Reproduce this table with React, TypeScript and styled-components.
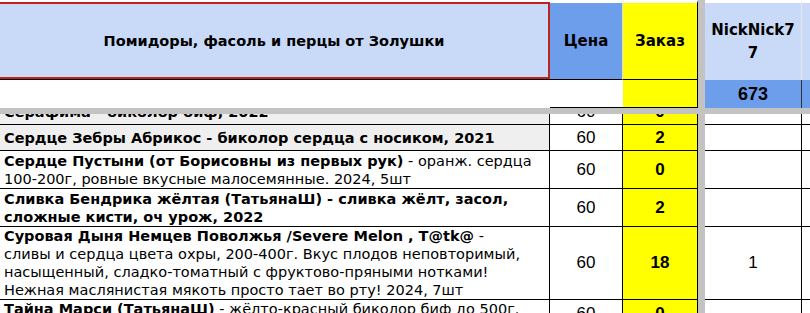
import styled, { createGlobalStyle } from 'styled-components';

const GlobalStyle = createGlobalStyle`
  html, body {
    margin: 0;
    padding: 0;
    background: #fff;
  }
`;

const LIGHT_BLUE = '#c9daf8';
const BLUE = '#6d9eeb';
const YELLOW = '#ffff00';
const SPLIT = '#c3c3c3';

const Sheet = styled.div`
  width: 810px;
  height: 313px;
  overflow: hidden;
  display: flex;
  flex-direction: column;
  font-family: "DejaVu Sans", Verdana, sans-serif;
  color: #000;
`;

const Row = styled.div<{ $h: number }>`
  display: flex;
  flex: none;
  height: ${p => p.$h}px;
`;

const Cell = styled.div<{ $w?: number; $bg?: string; $right?: string; $bottom?: string; $top?: number }>`
  box-sizing: border-box;
  ${p => (p.$w ? `width: ${p.$w}px; flex: none;` : 'flex: 1;')}
  height: 100%;
  background: ${p => p.$bg || '#fff'};
  border-right: ${p => (p.$right ? `1px solid ${p.$right}` : 'none')};
  border-bottom: ${p => (p.$bottom ? `1px solid ${p.$bottom}` : 'none')};
  border-top: ${p => (p.$top ? `${p.$top}px solid #fff` : 'none')};
  display: flex;
  align-items: center;
  justify-content: center;
  text-align: center;
  overflow: hidden;
`;

const Split = styled.div`
  width: 7px;
  flex: none;
  height: 100%;
  background: ${SPLIT};
`;

const HSplit = styled.div`
  height: 6px;
  flex: none;
  background: ${SPLIT};
`;

const TitleCell = styled.div`
  box-sizing: border-box;
  width: 550px;
  flex: none;
  height: 100%;
  padding-top: 2px;
  border-bottom: 1px solid #000;
`;

const TitleBox = styled.div`
  box-sizing: border-box;
  height: 77px;
  background: ${LIGHT_BLUE};
  border-top: 2px solid #c0231e;
  border-right: 2px solid #c0231e;
  border-bottom: 2px solid #c0231e;
  display: flex;
  align-items: center;
  justify-content: center;
  font-weight: bold;
  font-size: 14.5px;
`;

const HeadText = styled.div`
  font-weight: bold;
  font-size: 15px;
  line-height: 23px;
`;

const Total = styled.span`
  font-family: "Liberation Sans", Arial, sans-serif;
  font-weight: bold;
  font-size: 18px;
`;

const Body = styled.div`
  flex: 1;
  overflow: hidden;
`;

const BodyInner = styled.div`
  margin-top: -15px;
  display: flex;
  flex-direction: column;
`;

const NameCell = styled.div<{ $bg?: string; $top?: boolean }>`
  box-sizing: border-box;
  width: 550px;
  flex: none;
  height: 100%;
  padding: 0 4px;
  background: ${p => p.$bg || '#fff'};
  border-right: 1px solid #000;
  border-bottom: 1px solid #000;
  display: flex;
  flex-direction: column;
  justify-content: ${p => (p.$top ? 'flex-start' : 'center')};
  overflow: hidden;
  font-size: 14.5px;
  line-height: 18px;
`;

const Line = styled.div`
  white-space: nowrap;
`;

const Num = styled.span<{ $bold?: boolean }>`
  font-family: "Liberation Sans", Arial, sans-serif;
  font-size: 17px;
  font-weight: ${p => (p.$bold ? 'bold' : 'normal')};
`;

type Item = {
  h: number;
  bg?: string;
  top?: boolean;
  lines: React.ReactNode[];
  price: string;
  order: string;
  nick?: string;
};

const items: Item[] = [
  { h: 26, bg: '#efefef', lines: [<b>Серафима - биколор биф, 2022</b>], price: '60', order: '0' },
  { h: 26, bg: '#efefef', lines: [<b>Сердце Зебры Абрикос - биколор сердца с носиком, 2021</b>], price: '60', order: '2' },
  {
    h: 38,
    lines: [
      <><b>Сердце Пустыни (от Борисовны из первых рук)</b> - оранж. сердца</>,
      '100-200г, ровные вкусные малосемянные. 2024, 5шт',
    ],
    price: '60',
    order: '0',
  },
  {
    h: 38,
    lines: [
      <b>Сливка Бендрика жёлтая (ТатьянаШ) - сливка жёлт, засол,</b>,
      <b>сложные кисти, оч урож, 2022</b>,
    ],
    price: '60',
    order: '2',
  },
  {
    h: 73,
    lines: [
      <><b>Суровая Дыня Немцев Поволжья /Severe Melon , T@tk@</b> -</>,
      'сливы  и сердца цвета охры, 200-400г. Вкус плодов неповторимый,',
      'насыщенный, сладко-томатный с фруктово-пряными нотками!',
      'Нежная маслянистая мякоть просто тает во рту! 2024, 7шт',
    ],
    price: '60',
    order: '18',
    nick: '1',
  },
  {
    h: 28,
    top: true,
    lines: [
      <><b>Тайна Марси (ТатьянаШ)</b> - жёлто-красный биколор биф до 500г.</>,
      'Урожайный, вкусный. 2024',
    ],
    price: '60',
    order: '0',
  },
];

const App = () => {
  return (
    <Sheet>
      <GlobalStyle />
      <Row $h={80}>
        <TitleCell>
          <TitleBox>Помидоры, фасоль и перцы от Золушки</TitleBox>
        </TitleCell>
        <Cell $w={73} $bg={BLUE} $top={3} $right="#dcdcdc" $bottom="#000">
          <HeadText>Цена</HeadText>
        </Cell>
        <Cell $w={75} $bg={YELLOW} $top={3} $right="#000" $bottom="#000">
          <HeadText>Заказ</HeadText>
        </Cell>
        <Split />
        <Cell $w={97} $bg={LIGHT_BLUE} $top={3} $right="#e8e8e8">
          <HeadText>NickNick7<br />7</HeadText>
        </Cell>
        <Cell $bg={LIGHT_BLUE} $top={3} />
      </Row>
      <Row $h={28}>
        <Cell $w={550} />
        <Cell $w={73} $bottom="#000" />
        <Cell $w={75} $bg={YELLOW} $right="#000" $bottom="#000" />
        <Split />
        <Cell $w={97} $bg={BLUE} $right="#333">
          <Total>673</Total>
        </Cell>
        <Cell $bg={BLUE} />
      </Row>
      <HSplit />
      <Body>
        <BodyInner>
          {items.map((it, i) => (
            <Row $h={it.h} key={i}>
              <NameCell $bg={it.bg} $top={it.top}>
                {it.lines.map((l, j) => (
                  <Line key={j}>{l}</Line>
                ))}
              </NameCell>
              <Cell $w={73} $right="#000" $bottom="#000">
                <Num>{it.price}</Num>
              </Cell>
              <Cell $w={75} $bg={YELLOW} $right="#000" $bottom="#000">
                <Num $bold>{it.order}</Num>
              </Cell>
              <Split />
              <Cell $w={97} $right="#000" $bottom="#000">
                {it.nick && <Num>{it.nick}</Num>}
              </Cell>
              <Cell $bottom="#000" />
            </Row>
          ))}
        </BodyInner>
      </Body>
    </Sheet>
  );
};

export default App;
